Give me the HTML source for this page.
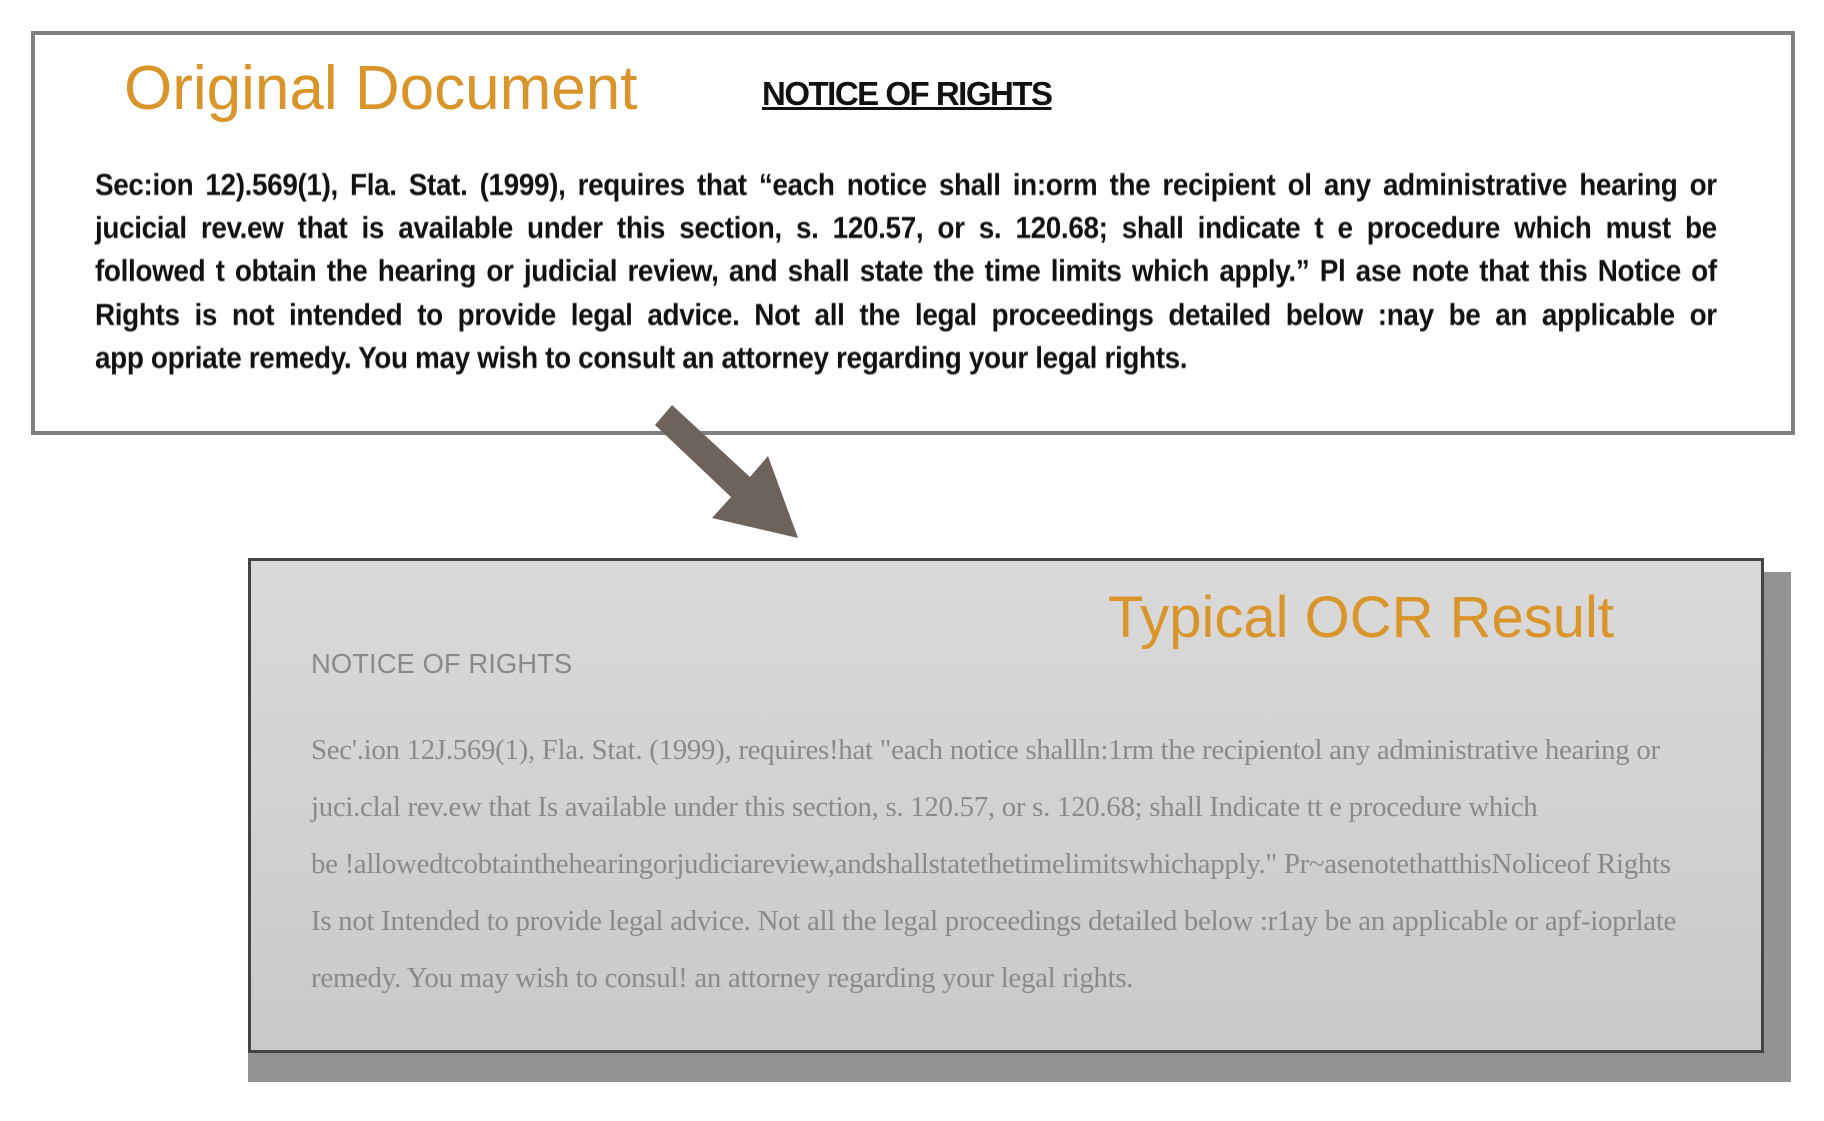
<!DOCTYPE html>
<html><head><meta charset="utf-8"><style>
body{margin:0;width:1824px;height:1121px;background:#fff;position:relative;overflow:hidden;font-family:"Liberation Sans",sans-serif}
.top{position:absolute;left:31px;top:31px;width:1756px;height:396px;border:4px solid #808080;background:#fff}
.t1{position:absolute;left:89px;top:18px;font-size:62px;color:#d9952a;white-space:nowrap}
.n1{position:absolute;left:727px;top:40px;font-size:33px;font-weight:bold;text-decoration:underline;letter-spacing:-1.5px;color:#111;white-space:nowrap}
.b1{position:absolute;left:60px;top:128px;width:1802px;transform:scaleX(.9);transform-origin:left top;font-size:31px;font-weight:bold;line-height:43.2px;color:#111;letter-spacing:-0.4px;filter:blur(.4px)}
.b1 div{text-align:justify;text-align-last:justify;white-space:nowrap}
.b1 div.l{text-align-last:left}
.shadow{position:absolute;left:248px;top:572px;width:1543px;height:510px;background:#939393}
.bot{position:absolute;left:248px;top:558px;width:1510px;height:489px;border:3px solid #444;background:linear-gradient(#dadada,#c9c9c9)}
.t2{position:absolute;left:857px;top:23px;font-size:58px;color:#d9952a;white-space:nowrap}
.n2{position:absolute;left:60px;top:87px;font-size:27.5px;color:#8a8a8a}
.b2{position:absolute;left:60px;top:161px;font-family:"Liberation Serif",serif;font-size:28.9px;color:#8a8a8a;line-height:57px;white-space:nowrap;letter-spacing:-0.3px}
</style></head><body>
<div class="top">
<div class="t1">Original Document</div>
<div class="n1">NOTICE OF RIGHTS</div>
<div class="b1">
<div>Sec:ion 12).569(1), Fla. Stat. (1999), requires that “each notice shall in:orm the recipient ol any administrative hearing or</div>
<div>jucicial rev.ew that is available under this section, s. 120.57, or s. 120.68; shall indicate t e procedure which must be</div>
<div>followed t obtain the hearing or judicial review, and shall state the time limits which apply.” Pl ase note that this Notice of</div>
<div>Rights is not intended to provide legal advice. Not all the legal proceedings detailed below :nay be an applicable or</div>
<div class="l">app opriate remedy. You may wish to consult an attorney regarding your legal rights.</div>
</div>
</div>
<svg style="position:absolute;left:0;top:0" width="1824" height="1121"><polygon points="655,425 672,405 750,477 768,456 798,538 712,518 731,497" fill="#6e625c"/></svg>
<div class="shadow"></div>
<div class="bot">
<div class="t2">Typical OCR Result</div>
<div class="n2">NOTICE OF RIGHTS</div>
<div class="b2">Sec'.ion 12J.569(1), Fla. Stat. (1999), requires!hat "each notice shallln:1rm the recipientol any administrative hearing or<br>juci.clal rev.ew that Is available under this section, s. 120.57, or s. 120.68; shall Indicate tt e procedure which<br>be !allowedtcobtainthehearingorjudiciareview,andshallstatethetimelimitswhichapply." Pr~asenotethatthisNoliceof Rights<br>Is not Intended to provide legal advice. Not all the legal proceedings detailed below :r1ay be an applicable or apf-ioprlate<br>remedy. You may wish to consul! an attorney regarding your legal rights.</div>
</div>
</body></html>
